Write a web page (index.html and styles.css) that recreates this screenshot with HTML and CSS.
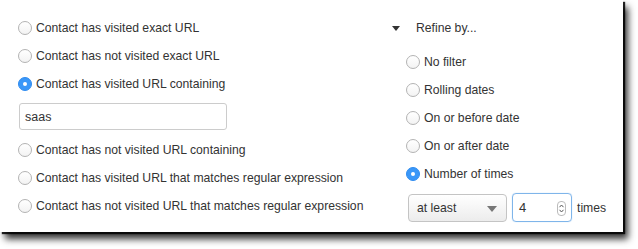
FILE: index.html
```html
<!DOCTYPE html>
<html lang="en">
<head>
    <meta charset="UTF-8">
    <title>URL filter</title>
    <link rel="stylesheet" href="styles.css">
</head>
<body>
    <div class="panel">
        <div class="col-left">
            <label class="option"><input type="radio" name="url"> Contact has visited exact URL</label>
            <label class="option"><input type="radio" name="url"> Contact has not visited exact URL</label>
            <label class="option"><input type="radio" name="url" checked> Contact has visited URL containing</label>
            <input type="text" class="url-input" value="saas">
            <label class="option"><input type="radio" name="url"> Contact has not visited URL containing</label>
            <label class="option"><input type="radio" name="url"> Contact has visited URL that matches regular expression</label>
            <label class="option"><input type="radio" name="url"> Contact has not visited URL that matches regular expression</label>
        </div>
        <div class="col-right">
            <div class="refine-head"><span class="caret"></span>Refine by...</div>
            <div class="refine-list">
                <label class="option"><input type="radio" name="refine"> No filter</label>
                <label class="option"><input type="radio" name="refine"> Rolling dates</label>
                <label class="option"><input type="radio" name="refine"> On or before date</label>
                <label class="option"><input type="radio" name="refine"> On or after date</label>
                <label class="option"><input type="radio" name="refine" checked> Number of times</label>
                <div class="times-row">
                    <div class="select">at least<span class="select-arrow"></span></div>
                    <div class="number">4<span class="spinner"><svg width="7" height="11" viewBox="0 0 7 11"><path d="M1.5 4.2 L3.5 2 L5.5 4.2 M1.5 6.8 L3.5 9 L5.5 6.8" fill="none" stroke="#555" stroke-width="1"/></svg></span></div>
                    <span class="times-label">times</span>
                </div>
            </div>
        </div>
    </div>
</body>
</html>
```

FILE: styles.css
```css
html, body { height: 249px; }
body { margin: 0; padding: 0; background: #fff; font-family: "Liberation Sans", Arial, sans-serif; font-size: 12.2px; color: #333; overflow: hidden; }
.panel { width: 623px; height: 232px; background: #fff; box-shadow: 2px 2px 1px rgba(0, 0, 0, 0.85), 5px 7px 7px rgba(0, 0, 0, 0.8); display: flex; box-sizing: border-box; padding-top: 14px; }
.col-left { width: 363px; padding-left: 18px; display: flex; flex-direction: column; }
.col-right { flex: 1; display: flex; flex-direction: column; }
.option { display: flex; align-items: center; height: 28px; gap: 4px; white-space: nowrap; }
.option input { appearance: none; -webkit-appearance: none; margin: 0; width: 14px; height: 14px; border-radius: 50%; border: 1px solid #b3b3b3; background: linear-gradient(#fff, #f3f3f3); box-sizing: border-box; position: relative; flex: none; }
.option input:checked { background: #3a97f8; border-color: #2f8cf0; }
.option input:checked::after { content: ""; position: absolute; left: 4px; top: 4px; width: 4px; height: 4px; border-radius: 50%; background: #fff; }
.url-input { width: 208px; height: 27px; margin: 5px 0 6px 1px; box-sizing: border-box; border: 1px solid #ccc; border-radius: 3px; padding: 0 5px; font: inherit; font-size: 12.5px; color: #333; }
.refine-head { height: 28px; display: flex; align-items: center; padding-left: 11px; }
.caret { width: 0; height: 0; border-left: 4px solid transparent; border-right: 4px solid transparent; border-top: 5px solid #333; margin-right: 16px; }
.refine-list { padding-left: 25px; margin-top: 6px; display: flex; flex-direction: column; }
.times-row { display: flex; align-items: center; margin-top: 5px; gap: 5px; }
.select { width: 99px; height: 28px; box-sizing: border-box; border: 1px solid #c4c4c4; border-radius: 4px; background: linear-gradient(#fff, #ececec); display: flex; align-items: center; padding-left: 8px; position: relative; margin-left: 2px; }
.select-arrow { position: absolute; right: 9px; top: 11px; border-left: 5px solid transparent; border-right: 5px solid transparent; border-top: 6px solid #777; }
.number { width: 60px; height: 29px; box-sizing: border-box; border: 1px solid #7fb5ea; border-radius: 4px; box-shadow: 0 0 1px #9cc8f2; display: flex; align-items: center; padding-left: 6px; font-size: 13px; position: relative; }
.spinner { position: absolute; right: 5px; top: 7px; width: 7px; height: 13px; border: 1px solid #bbb; border-radius: 4px; display: flex; align-items: center; justify-content: center; }
.times-label { margin-left: 0; }
```
